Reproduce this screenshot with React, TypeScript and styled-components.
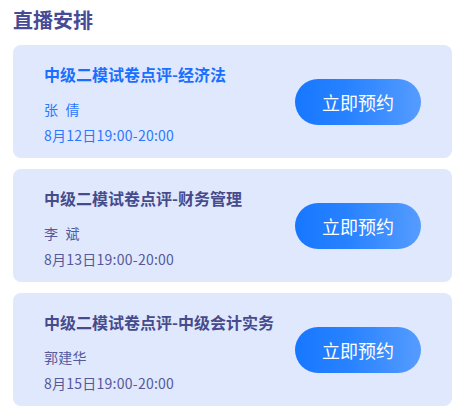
import React, { FC } from 'react'
import styled, { createGlobalStyle } from 'styled-components'

const GlobalStyle = createGlobalStyle`
  html, body {
    margin: 0;
    padding: 0;
    background: #FFFFFF;
    font-family: 'Noto Sans CJK SC', 'Noto Sans', sans-serif;
  }
`

const Wrapper = styled.div`
  padding: 6px 1px 0 13px;
`

const Heading = styled.h2`
  margin: 0 0 11px;
  font-size: 20px;
  line-height: 28px;
  font-weight: 700;
  color: #464b98;
`

const List = styled.div`
  display: flex;
  flex-direction: column;
  gap: 11px;
`

const Card = styled.div`
  height: 113px;
  box-sizing: border-box;
  background: #e0e8fd;
  border-radius: 8px;
  display: flex;
  align-items: center;
  justify-content: space-between;
  padding: 0 31px 0 31px;
`

const Info = styled.div<{ $active: boolean }>`
  display: flex;
  flex-direction: column;
  padding-top: 5px;
  color: ${p => (p.$active ? '#2b78ff' : '#55599a')};

  h4 {
    margin: 0 0 14px;
    font-size: 16px;
    line-height: 22px;
    font-weight: 700;
    color: ${p => (p.$active ? '#1a6fff' : '#474b8c')};
  }

  span {
    font-size: 14px;
    line-height: 20px;
    letter-spacing: 0.25px;
    white-space: pre;
  }

  span + span {
    margin-top: 6px;
  }
`

const Button = styled.button`
  width: 126px;
  height: 46px;
  border: none;
  border-radius: 23px;
  background: linear-gradient(90deg, #1677ff 0%, #2a83ff 45%, #559cff 100%);
  color: #FFFFFF;
  font-family: inherit;
  font-size: 18px;
  cursor: pointer;
`

interface Lesson {
  title: string
  teacher: string
  time: string
}

const lessons: Lesson[] = [
  { title: '中级二模试卷点评-经济法', teacher: '张\u2002倩', time: '8月12日19:00-20:00' },
  { title: '中级二模试卷点评-财务管理', teacher: '李\u2002斌', time: '8月13日19:00-20:00' },
  { title: '中级二模试卷点评-中级会计实务', teacher: '郭建华', time: '8月15日19:00-20:00' },
]

const App: FC = () => {
  return (
    <Wrapper>
      <GlobalStyle />
      <Heading>直播安排</Heading>
      <List>
        {lessons.map((item, i) => (
          <Card key={item.title}>
            <Info $active={i === 0}>
              <h4>{item.title}</h4>
              <span>{item.teacher}</span>
              <span>{item.time}</span>
            </Info>
            <Button>立即预约</Button>
          </Card>
        ))}
      </List>
    </Wrapper>
  )
}

export default App
